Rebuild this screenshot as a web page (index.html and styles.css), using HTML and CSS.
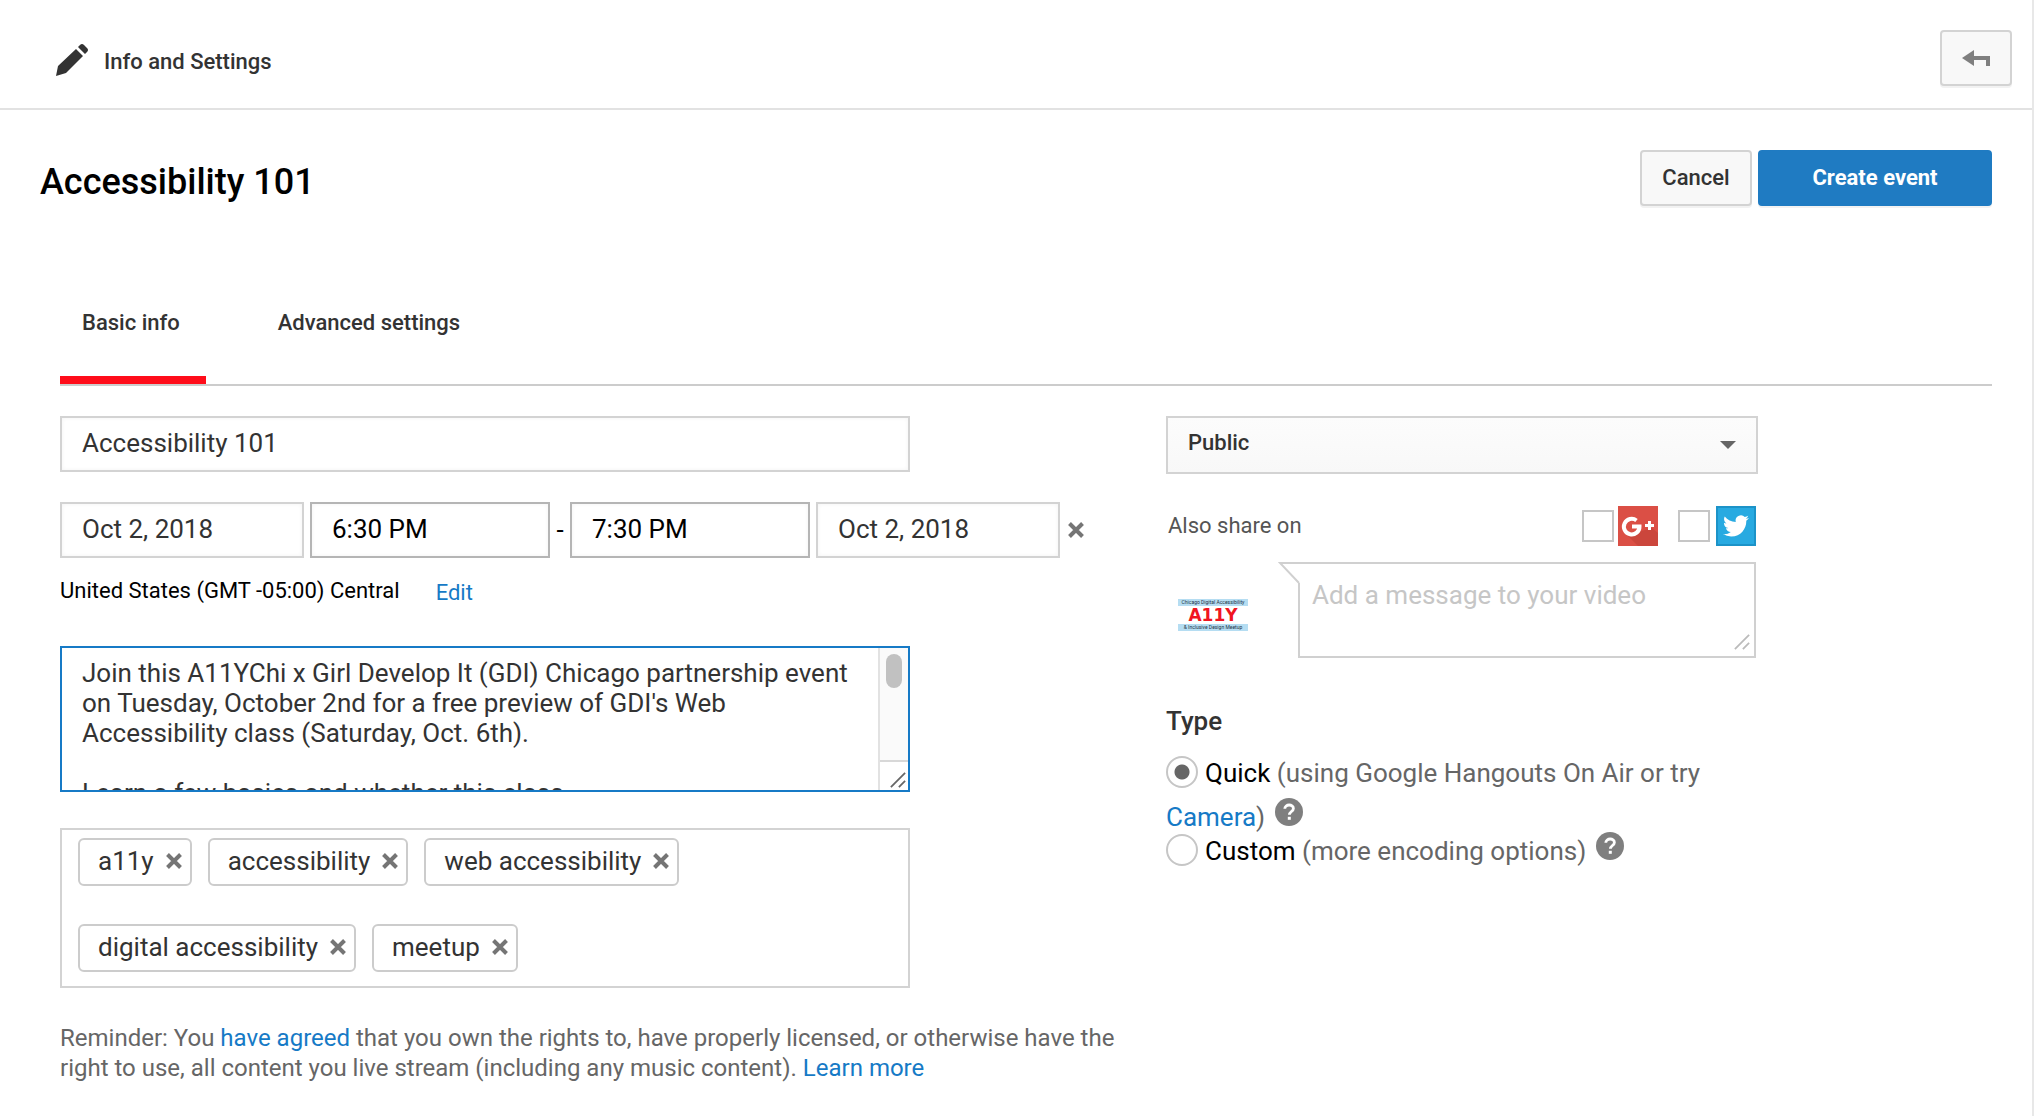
FILE: index.html
```html
<!DOCTYPE html>
<html lang="en">
<head>
<meta charset="utf-8">
<title>Info and Settings</title>
<link rel="stylesheet" href="styles.css">
</head>
<body>
<svg class="defs" aria-hidden="true">
  <symbol id="cross" viewBox="0 0 16 16"><path d="M1.500 1.500l13 13M14.500 1.500l-13 13" stroke="#757575" stroke-width="4" fill="none"/></symbol>
  <symbol id="grip" viewBox="0 0 18 18"><path d="M1 17L17 1M10 17l7-7" stroke="currentColor" stroke-width="2" fill="none"/></symbol>
  <symbol id="question" viewBox="0 0 28 28"><circle cx="14" cy="14" r="14" fill="#7f7f7f"/><path d="M9.8 10.8c0-5 8.6-5 8.6-.4 0 3-4 3.200-4 6.400" stroke="#fff" stroke-width="2.800" fill="none"/><path d="M12.800 18.800h3v3h-3z" fill="#fff"/></symbol>
</svg>
<div class="page">
  <header class="topbar">
    <div class="topbar-title">
      <svg class="pencil" viewBox="0 0 32 32" aria-hidden="true"><path d="M0 32l2-10L20 5l7 7L10 29zM22 3l2-2q2-2 4 0l3 3q2 2 0 4l-2 2z" fill="#333"/></svg>
      <span>Info and Settings</span>
    </div>
    <button class="button back" type="button" aria-label="Back">
      <svg viewBox="0 0 28 16" aria-hidden="true"><path d="M0 8L12 0v6h16v10h-4v-6H12v6z" fill="#7f7f7f"/></svg>
    </button>
  </header>
  <main class="content">
    <div class="heading">
      <h1>Accessibility 101</h1>
      <div class="actions">
        <button class="button cancel" type="button">Cancel</button>
        <button class="button primary" type="button">Create event</button>
      </div>
    </div>
    <nav class="tabs">
      <a class="tab active" href="#basic">Basic info</a>
      <a class="tab" href="#advanced">Advanced settings</a>
    </nav>
    <form class="columns">
      <div class="details">
        <div class="fields">
          <input class="field" type="text" aria-label="Title" value="Accessibility 101">
        </div>
        <div class="schedule">
          <input class="field date" type="text" aria-label="Start date" value="Oct 2, 2018">
          <input class="field time" type="text" aria-label="Start time" value="6:30 PM">
          <span class="dash">-</span>
          <input class="field time" type="text" aria-label="End time" value="7:30 PM">
          <input class="field date" type="text" aria-label="End date" value="Oct 2, 2018">
          <button class="remove" type="button" aria-label="Remove end time"><svg aria-hidden="true"><use href="#cross"/></svg></button>
        </div>
        <div class="timezone"><span>United States (GMT -05:00) Central</span><a href="#timezone">Edit</a></div>
        <div class="description">
          <textarea aria-label="Description">Join this A11YChi x Girl Develop It (GDI) Chicago partnership event on Tuesday, October 2nd for a free preview of GDI's Web Accessibility class (Saturday, Oct. 6th).

Learn a few basics and whether this class</textarea>
          <div class="scrollbar" aria-hidden="true">
            <div class="track"><div class="thumb"></div></div>
            <div class="corner"><svg class="grip"><use href="#grip"/></svg></div>
          </div>
        </div>
        <div class="tags">
          <span class="tag">a11y<button class="remove" type="button" aria-label="Remove a11y"><svg aria-hidden="true"><use href="#cross"/></svg></button></span>
          <span class="tag">accessibility<button class="remove" type="button" aria-label="Remove accessibility"><svg aria-hidden="true"><use href="#cross"/></svg></button></span>
          <span class="tag">web accessibility<button class="remove" type="button" aria-label="Remove web accessibility"><svg aria-hidden="true"><use href="#cross"/></svg></button></span>
          <span class="tag">digital accessibility<button class="remove" type="button" aria-label="Remove digital accessibility"><svg aria-hidden="true"><use href="#cross"/></svg></button></span>
          <span class="tag">meetup<button class="remove" type="button" aria-label="Remove meetup"><svg aria-hidden="true"><use href="#cross"/></svg></button></span>
        </div>
        <p class="reminder">Reminder: You <a href="#terms">have agreed</a> that you own the rights to, have properly licensed, or otherwise have the right to use, all content you live stream (including any music content). <a href="#learn">Learn more</a></p>
      </div>
      <div class="sharing">
        <div class="select">
          <select aria-label="Privacy"><option>Public</option></select>
          <svg class="arrow" viewBox="0 0 16 8" aria-hidden="true"><path d="M0 0h16L8 8z" fill="#666"/></svg>
        </div>
        <div class="share">
          <span class="share-text">Also share on</span>
          <label class="network"><input type="checkbox" aria-label="Google+">
            <svg viewBox="0 0 40 40" aria-hidden="true"><path d="M0 0h40v40H0z" fill="#db4f45"/><path d="M20 26l14-4 6 5v13H20l-12-12z" fill="#cb463c"/><path d="M18.500 14.500A7.800 7.800 0 1 0 21.500 20.500H14" stroke="#fff" stroke-width="4" fill="none"/><path d="M31.500 15v9M27 19.500h9" stroke="#fff" stroke-width="3" fill="none"/></svg>
          </label>
          <label class="network twitter"><input type="checkbox" aria-label="Twitter">
            <svg viewBox="0 0 40 40" aria-hidden="true"><path d="M1 1h38v38H1z" fill="#28aae1" stroke="#1c93c8" stroke-width="2"/><path transform="translate(7 7) scale(1.080)" d="M23.953 4.570a10 10 0 01-2.825.775 4.958 4.958 0 002.163-2.723c-.951.555-2.005.959-3.127 1.184a4.920 4.920 0 00-8.384 4.482C7.690 8.095 4.067 6.130 1.640 3.162a4.822 4.822 0 00-.666 2.475c0 1.710.870 3.213 2.188 4.096a4.904 4.904 0 01-2.228-.616v.060a4.923 4.923 0 003.946 4.827 4.996 4.996 0 01-2.212.085 4.936 4.936 0 004.604 3.417 9.867 9.867 0 01-6.102 2.105c-.390 0-.779-.023-1.170-.067a13.995 13.995 0 007.557 2.209c9.053 0 13.998-7.496 13.998-13.985 0-.210 0-.420-.015-.630A9.935 9.935 0 0024 4.590z" fill="#fff"/></svg>
          </label>
        </div>
        <div class="message">
          <div class="avatar">
            <span class="strip">Chicago Digital Accessibility</span>
            <span class="logo">A11Y</span>
            <span class="strip">&amp; Inclusive Design Meetup</span>
          </div>
          <div class="bubble">
            <textarea aria-label="Message" placeholder="Add a message to your video"></textarea>
            <svg class="pointer" viewBox="0 0 22 22" aria-hidden="true"><path d="M2 1H22V21H21z" fill="#fff"/><path d="M22 1H2L21 21" stroke="#d0d0d0" stroke-width="2" fill="none"/></svg>
            <svg class="grip" aria-hidden="true"><use href="#grip"/></svg>
          </div>
        </div>
        <fieldset class="type">
          <legend>Type</legend>
          <div class="option"><input type="radio" name="type" id="quick" checked><label for="quick">Quick</label> <span class="note">(using Google Hangouts On Air or try <a href="#camera">Camera</a>)</span> <svg class="help help-tall" role="img" aria-label="Help"><use href="#question"/></svg></div>
          <div class="option"><input type="radio" name="type" id="custom"><label for="custom">Custom</label> <span class="note">(more encoding options)</span> <svg class="help" role="img" aria-label="Help"><use href="#question"/></svg></div>
        </fieldset>
      </div>
    </form>
  </main>
</div>
</body>
</html>
```
FILE: styles.css
```css
* { box-sizing: border-box; }
body {
  margin: 0;
  background: #fff;
  color: #333;
  font: 22px/26px Roboto, "Liberation Sans", sans-serif;
}
input, textarea, select, button { font: inherit; color: inherit; margin: 0; border-radius: 0; }
svg { display: block; }
a { color: #167ac6; text-decoration: none; }
.defs { display: none; }
.page { min-height: 100vh; border-right: 2px solid #e8e8e8; }

.topbar {
  display: flex;
  justify-content: space-between;
  padding: 30px 20px 22px 56px;
  border-bottom: 2px solid #e2e2e2;
}
.topbar-title { display: flex; align-items: center; gap: 16px; padding-top: 4px; font-weight: 500; }
.topbar-title span { padding-top: 4px; }
.pencil { width: 32px; height: 32px; }
.button {
  height: 56px;
  border: 2px solid #d3d3d3;
  border-radius: 4px;
  background: #f8f8f8;
  box-shadow: 0 2px 0 rgba(0, 0, 0, .05);
  font-weight: 500;
  padding: 0;
}
.back { width: 72px; display: flex; align-items: center; justify-content: center; }
.back svg { width: 28px; height: 16px; }
.cancel { width: 112px; }
.primary { width: 234px; border-color: #1f7bc2; background: #1f7bc2; color: #fff; font-weight: 700; }

.content { padding: 40px 40px 32px; }
.heading { display: flex; justify-content: space-between; align-items: flex-end; }
h1 { margin: 0; color: #000; font-size: 36px; line-height: 48px; font-weight: 500; }
.actions { display: flex; gap: 6px; }
.tabs {
  display: flex;
  gap: 50px;
  margin: 104px 0 30px 20px;
  border-bottom: 2px solid #ccc;
}
.tab { padding: 0 26px 40px 22px; border-bottom: 8px solid transparent; color: #333; font-weight: 500; }
.tab.active { border-color: #ff0d1a; }

.columns { display: grid; grid-template-columns: 1106fr 826fr; margin-left: 20px; }
.fields, .description, .tags { max-width: 850px; }
.field {
  width: 100%;
  height: 56px;
  padding: 0 20px 2px;
  border: 2px solid #d3d3d3;
  background: #fff;
  font-size: 26px;
  box-shadow: inset 0 0 4px rgba(0, 0, 0, .05);
}
.schedule { display: flex; align-items: center; gap: 6px; margin-top: 30px; color: #000; }
.date { width: 244px; color: #333; }
.time { width: 240px; border-color: #b5b5b5; }
.dash { width: 8px; text-align: center; font-size: 26px; }
.remove { width: 16px; height: 16px; padding: 0; border: 0; background: none; }
.remove svg { width: 16px; height: 16px; }
.schedule .remove { margin-left: 2px; }
.timezone { display: flex; align-items: flex-end; gap: 36px; margin-top: 20px; color: #000; }
.timezone a { line-height: 22px; }
.description { display: flex; height: 146px; margin-top: 42px; border: 2px solid #167ac6; }
textarea { display: block; resize: none; border: 0; outline: 0; overflow: hidden; background: #fff; font-size: 26px; line-height: 30px; }
.description textarea { flex: 1; padding: 10px 20px 0; }
.scrollbar { display: flex; flex-direction: column; width: 30px; border-left: 2px solid #e2e2e2; }
.track { flex: 1; padding: 6px; background: #fafafa; }
.thumb { width: 16px; height: 34px; border-radius: 8px; background: #c1c1c1; }
.corner { display: flex; align-items: flex-end; justify-content: flex-end; height: 30px; padding: 2px; border-top: 2px solid #d8d8d8; color: #666; }
.grip { width: 16px; height: 16px; }
.tags {
  display: flex;
  flex-wrap: wrap;
  gap: 38px 16px;
  margin-top: 36px;
  padding: 8px 16px 14px;
  border: 2px solid #d3d3d3;
}
.tag {
  display: flex;
  align-items: center;
  gap: 12px;
  height: 48px;
  padding: 0 8px 2px 18px;
  border: 2px solid #ccc;
  border-radius: 6px;
  font-size: 26px;
  line-height: 40px;
}
.reminder { max-width: 1074px; margin: 35px 0 0; color: #666; font-size: 24px; line-height: 30px; }

.sharing { width: 592px; max-width: 100%; }
.select { display: grid; align-items: center; justify-items: end; }
.select > * { grid-area: 1 / 1; }
.select select {
  width: 100%;
  height: 58px;
  padding: 0 20px 4px;
  border: 2px solid #d3d3d3;
  background: linear-gradient(#fcfcfc, #f8f8f8);
  font-weight: 500;
  appearance: none;
}
.arrow { width: 16px; height: 8px; margin-right: 22px; }
.share { display: flex; align-items: center; gap: 20px; margin: 32px 2px 16px; color: #555; }
.share-text { flex: 1; }
.network { display: flex; align-items: center; gap: 4px; }
.twitter { gap: 6px; }
.network input { appearance: none; width: 32px; height: 32px; border: 2px solid #c6c6c6; background: #fff; }
.network svg { width: 40px; height: 40px; }
.message { display: flex; align-items: center; gap: 50px; margin: 0 2px 0 12px; }
.avatar { width: 70px; padding-top: 10px; text-align: center; }
.strip { display: block; background: #b5ddf2; color: #234; font-size: 5px; line-height: 7px; white-space: nowrap; }
.logo { display: block; color: #f01420; font: bold 17px/18px "DejaVu Sans", sans-serif; }
.bubble { position: relative; flex: 1; }
.bubble textarea { width: 100%; height: 96px; padding: 16px 12px; border: 2px solid #d0d0d0; }
.bubble ::placeholder { color: #c6c6c6; }
.pointer { position: absolute; left: -20px; top: 0; width: 22px; height: 22px; }
.bubble .grip { position: absolute; right: 6px; bottom: 8px; color: #bbb; }
.type { margin: 46px 0 0; padding: 0; border: 0; color: #000; font-size: 26px; line-height: 34px; }
.type legend { padding: 0; margin-bottom: 18px; color: #333; font-weight: 500; }
.option input {
  appearance: none;
  width: 32px;
  height: 32px;
  margin-right: 7px;
  border: 2px solid #c6c6c6;
  border-radius: 50%;
  background: #fff;
  vertical-align: -6px;
}
.option input:checked { background: radial-gradient(circle, #666 7px, #fff 8px); }
.note { padding-right: 3px; color: #666; }
.help { display: inline-block; width: 28px; height: 28px; margin-top: -2px; vertical-align: baseline; }
.help-tall { margin-top: 8px; }
```
